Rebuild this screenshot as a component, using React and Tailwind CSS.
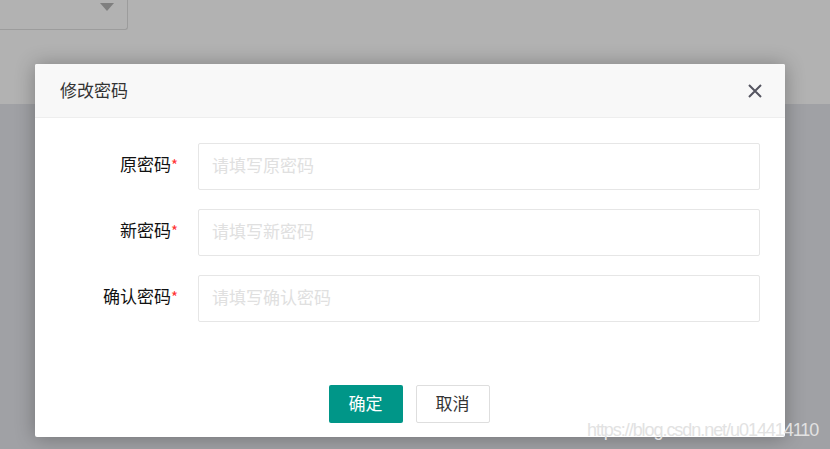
const fields = [
  { label: '原密码', placeholder: '请填写原密码' },
  { label: '新密码', placeholder: '请填写新密码' },
  { label: '确认密码', placeholder: '请填写确认密码' },
];

const App = () => {
  return (
    <div
      className="relative w-[830px] h-[449px] overflow-hidden bg-[#a0a1a5]"
      style={{ fontFamily: '"Noto Sans CJK SC", "Noto Sans", sans-serif' }}
    >
      {/* Page behind the mask */}
      <div className="h-[104px] bg-[#b2b2b2]">
        <div className="w-[128px] h-[30px] border-r border-b border-[#9c9c9c] rounded-br-[3px] flex justify-end pr-[13px] pt-[3px]">
          <div className="w-0 h-0 border-l-[7px] border-r-[7px] border-t-[8px] border-l-transparent border-r-transparent border-t-[#7f7f7f]" />
        </div>
      </div>

      {/* Dialog */}
      <div className="absolute left-[35px] top-[64px] w-[750px] h-[373px] bg-white rounded-[2px] shadow-[0_1px_20px_rgba(0,0,0,0.3)] flex flex-col">
        <div className="h-[54px] shrink-0 bg-[#f8f8f8] border-b border-[#eeeeee] rounded-t-[2px] flex items-center justify-between pl-[25px] pr-[22px]">
          <span className="text-[17px] text-[#333] pb-[2px]">修改密码</span>
          <svg width="16" height="16" viewBox="0 0 16 16" className="text-[#555560]">
            <path d="M2 2 L14 14 M14 2 L2 14" stroke="currentColor" strokeWidth="2" fill="none" />
          </svg>
        </div>

        <div className="flex flex-col gap-[19px] pt-[25px] pr-[25px]">
          {fields.map((f) => (
            <div key={f.label} className="flex items-center">
              <label className="w-[143px] shrink-0 flex justify-end items-start text-[17px] text-[#111] pb-[5px]">
                {f.label}
                <span className="text-[15px] text-[#ff3333] leading-none mt-[6px]">*</span>
              </label>
              <div className="ml-[20px] flex-1 h-[47px] border border-[#e6e6e6] rounded-[2px] flex items-center px-[13px] pb-[3px] text-[17px] text-[#e0e0e0]">
                {f.placeholder}
              </div>
            </div>
          ))}
        </div>

        <div className="mt-auto mb-[14px] flex justify-center gap-[13px] pr-[2px]">
          <button className="w-[74px] h-[38px] bg-[#009688] text-white text-[17px] rounded-[2px] pb-[2px]">确定</button>
          <button className="w-[74px] h-[38px] bg-white border border-[#dedede] text-[#333] text-[17px] rounded-[2px] pb-[2px]">取消</button>
        </div>
      </div>

      {/* Watermark */}
      <div
        className="absolute left-[587px] top-[421px] text-[18px] tracking-[-1.05px] text-[#e2e2e2] leading-none"
        style={{ fontFamily: '"Liberation Sans", Arial, sans-serif' }}
      >
        https://blog.csdn.net/u014414110
      </div>
    </div>
  );
};

export default App;
